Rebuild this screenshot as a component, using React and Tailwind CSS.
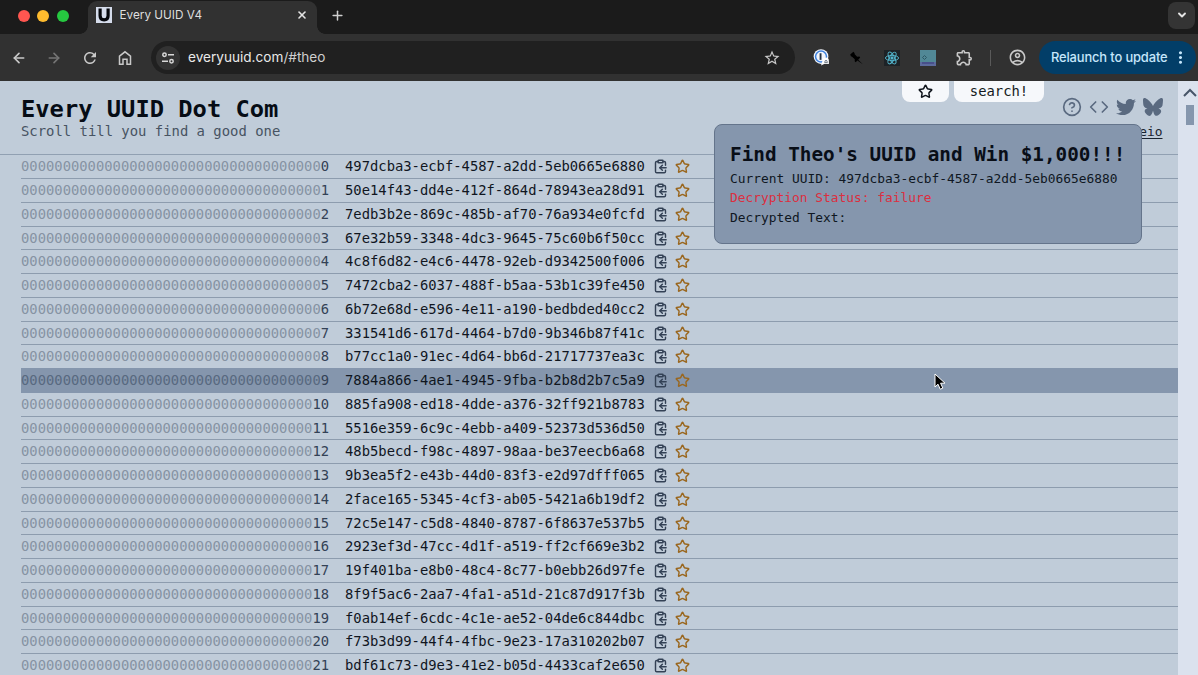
import React from "react";
import {
  ArrowLeft,
  ArrowRight,
  ChevronDown,
  CircleHelp,
  ClipboardCopy,
  Code,
  Plus,
  Star,
  X,
} from "lucide-react";
import { FaBluesky } from "react-icons/fa6";
import { FaTwitter } from "react-icons/fa";
import {
  MdOutlineAccountCircle,
  MdOutlineExtension,
  MdMoreVert,
  MdStarBorder,
  MdRefresh,
} from "react-icons/md";

const UUIDS = [
  "497dcba3-ecbf-4587-a2dd-5eb0665e6880",
  "50e14f43-dd4e-412f-864d-78943ea28d91",
  "7edb3b2e-869c-485b-af70-76a934e0fcfd",
  "67e32b59-3348-4dc3-9645-75c60b6f50cc",
  "4c8f6d82-e4c6-4478-92eb-d9342500f006",
  "7472cba2-6037-488f-b5aa-53b1c39fe450",
  "6b72e68d-e596-4e11-a190-bedbded40cc2",
  "331541d6-617d-4464-b7d0-9b346b87f41c",
  "b77cc1a0-91ec-4d64-bb6d-21717737ea3c",
  "7884a866-4ae1-4945-9fba-b2b8d2b7c5a9",
  "885fa908-ed18-4dde-a376-32ff921b8783",
  "5516e359-6c9c-4ebb-a409-52373d536d50",
  "48b5becd-f98c-4897-98aa-be37eecb6a68",
  "9b3ea5f2-e43b-44d0-83f3-e2d97dfff065",
  "2face165-5345-4cf3-ab05-5421a6b19df2",
  "72c5e147-c5d8-4840-8787-6f8637e537b5",
  "2923ef3d-47cc-4d1f-a519-ff2cf669e3b2",
  "19f401ba-e8b0-48c4-8c77-b0ebb26d97fe",
  "8f9f5ac6-2aa7-4fa1-a51d-21c87d917f3b",
  "f0ab14ef-6cdc-4c1e-ae52-04de6c844dbc",
  "f73b3d99-44f4-4fbc-9e23-17a310202b07",
  "bdf61c73-d9e3-41e2-b05d-4433caf2e650",
];
const HOVERED = 9;
const DIGITS = 37;

function TabStrip() {
  return (
    <div className="flex h-[34px] shrink-0 bg-[#1b1b1b]">
      <div className="flex w-[88px] items-center gap-[7.6px] pb-[3px] pl-[17.5px]">
        <span className="size-3 rounded-full bg-[#ff5650]" />
        <span className="size-3 rounded-full bg-[#febb2e]" />
        <span className="size-3 rounded-full bg-[#26c840]" />
      </div>
      <div className="relative mt-px flex w-[229px] items-center rounded-t-[9px] bg-[#313131] pr-[9.5px] pb-[5px] pl-2">
        <span className="absolute bottom-0 -left-2 size-2 bg-[radial-gradient(circle_at_0_0,#1b1b1b_7.5px,#313131_8px)]" />
        <span className="absolute -right-2 bottom-0 size-2 bg-[radial-gradient(circle_at_100%_0,#1b1b1b_7.5px,#313131_8px)]" />
        <svg viewBox="0 0 16 16" className="size-4">
          <rect width="16" height="16" fill="#d5dceb" />
          <path d="M4.1 1.5v7.2c0 2.6 1.4 4.1 4 4.1s4-1.5 4-4.1V1.5" fill="none" stroke="#05070c" strokeWidth="3.2" />
        </svg>
        <span className="ml-[7.5px] flex-1 pt-px text-[11.75px] text-[#dedede]">Every UUID V4</span>
        <X className="size-[12px] text-[#e4e4e4]" strokeWidth={3.2} />
      </div>
      <div className="flex flex-1 items-center justify-between pr-[3px] pb-[4px] pl-[12.5px]">
        <Plus className="size-[15px] text-[#cfcfcf]" strokeWidth={2.4} />
        <span className="flex size-[27px] items-center justify-center rounded-lg bg-[#343434]">
          <ChevronDown className="size-3 text-[#e4e4e4]" strokeWidth={3.8} />
        </span>
      </div>
    </div>
  );
}

function Toolbar() {
  return (
    <div className="flex h-[47px] shrink-0 items-center bg-[#313131] text-[#c9c9c9]">
      <ArrowLeft className="ml-[11px] size-4" strokeWidth={2.5} />
      <ArrowRight className="ml-[19px] size-4 text-[#757575]" strokeWidth={2.5} />
      <MdRefresh className="ml-[19px] size-[18px]" />
      <svg viewBox="0 0 16 16" className="ml-[18px] size-4" fill="none" stroke="currentColor" strokeWidth="1.5">
        <path d="M2.5 6.2 8 1.8l5.500 4.400v8H10V9.300H6v4.900H2.500z" />
      </svg>
      <div className="ml-[18px] flex h-[33px] w-[644px] items-center rounded-full bg-[#202020] pr-[14px] pl-[5px]">
        <span className="flex size-6 items-center justify-center rounded-full bg-[#333333]">
          <svg viewBox="0 0 14 14" className="size-[14px]" fill="none" stroke="#d8d8d8" strokeWidth="1.500">
            <circle cx="3.500" cy="3.800" r="1.700" />
            <path d="M7 3.800h6M1 10.200h6" />
            <circle cx="10.500" cy="10.200" r="1.700" />
          </svg>
        </span>
        <span className="ml-2 flex-1 text-[13.600px] text-[#e9e9e9]">
          everyuuid.com<span className="text-[#cfcfcf]">/#theo</span>
        </span>
        <MdStarBorder className="size-[18px]" />
      </div>
      <svg viewBox="0 0 18 18" className="ml-[18px] size-[17px]">
        <circle cx="8.500" cy="8" r="7.800" fill="#f2f5fb" />
        <circle cx="8.500" cy="8" r="5.800" fill="none" stroke="#3d81dd" strokeWidth="1.600" />
        <path d="M8 4.500v7" stroke="#243244" strokeWidth="2" />
        <path d="M8.500 17.500l1.500-5a3.300 3.300 0 0 1 6.800 0V16h-5z" fill="#fff" />
        <path d="M12.500 13.500a1.300 1.300 0 0 1 2.600 0M12 14.500h3.600" stroke="#55606d" fill="none" />
      </svg>
      <svg viewBox="0 0 16 16" className="ml-[18px] size-4">
        <path d="M2.200 4.600 5.400 1.800l1.300 1.500-.2.700 2.600 2.700 2.300-.1.800.9-2 2.200 4.600 4.600-5.400-3.900-1.700 1.800-1-.9.100-2.100-3-2.700-.8.100z" fill="#000" />
      </svg>
      <svg viewBox="0 0 16 16" className="ml-5 size-4" fill="none" stroke="#54b8d0" strokeWidth="0.900">
        <rect width="16" height="16" fill="#1d2226" stroke="none" />
        <ellipse cx="8" cy="8" rx="6.600" ry="2.600" />
        <ellipse cx="8" cy="8" rx="6.600" ry="2.600" transform="rotate(60 8 8)" />
        <ellipse cx="8" cy="8" rx="6.600" ry="2.600" transform="rotate(120 8 8)" />
        <circle cx="8" cy="8" r="1.200" fill="#54b8d0" />
      </svg>
      <svg viewBox="0 0 16 16" className="ml-5 size-4">
        <rect width="16" height="16" fill="#518896" />
        <rect y="12" width="16" height="4" fill="#5c6a9c" />
        <path d="M2 13h12" stroke="#3c3f80" strokeWidth="1.200" />
        <path d="M2.500 7.500 4.500 5.500 6.500 7.500 4.500 9.500z" fill="none" stroke="#2d5965" />
      </svg>
      <MdOutlineExtension className="ml-[19px] size-[19px]" />
      <span className="ml-[16px] h-4 w-px bg-[#5a5a5a]" />
      <MdOutlineAccountCircle className="ml-[17px] size-[19px]" />
      <div className="ml-[12px] flex h-[33px] w-[157px] items-center rounded-full bg-[#023e68] pl-[12px] text-[12.900px] font-medium tracking-[-0.010em] text-[#c5e6fb]">
        <span className="w-[119px] whitespace-nowrap">Relaunch to update</span>
        <MdMoreVert className="ml-px size-[19px] shrink-0" />
      </div>
    </div>
  );
}

function Header() {
  return (
    <header className="relative flex h-[74.400px] shrink-0 justify-between border-b border-[#91a0b2] pr-[15.500px] pl-[21px]">
      <div className="pt-[13px]">
        <h1 className="text-[23.75px] leading-[30px] font-bold text-[#060c15]">Every UUID Dot Com</h1>
        <p className="text-[13.900px] leading-[15px] text-[#475362]">Scroll till you find a good one</p>
      </div>
      <div className="flex flex-col items-end pt-[16px]">
        <div className="flex items-center gap-[7px] text-[#5a6a80]">
          <CircleHelp className="size-5" strokeWidth={2} />
          <Code className="size-5" strokeWidth={2} />
          <FaTwitter className="size-5" />
          <FaBluesky className="size-5" />
        </div>
        <a className="mt-[5.500px] text-[12.900px] leading-[18px] text-[#1b2430] underline underline-offset-2">eio</a>
      </div>
      <div className="absolute top-0 right-[134px] flex gap-[5px]">
        <button className="flex h-[21px] w-[47px] items-center justify-center rounded-b-lg bg-[#f6f8fb]">
          <Star className="size-[15px] text-[#10151d]" strokeWidth={2.400} />
        </button>
        <button className="flex h-[21px] w-[90px] justify-center rounded-b-lg bg-[#f6f8fb] text-[13.850px] leading-[21px] text-[#131820]">search!</button>
      </div>
    </header>
  );
}

function Row({ index, uuid }) {
  const digits = String(index);
  const hovered = index === HOVERED;
  return (
    <li
      className={
        "flex h-[23.750px] items-center border-b text-[13.830px] " +
        (hovered
          ? "border-[#8596ad] bg-[#8596ad]"
          : index === HOVERED - 1
            ? "border-[#8596ad]"
            : "border-[#8d9cae]")
      }
    >
      <span className="w-[308px] text-[#334155]">
        <span className={hovered ? "text-[#586980]" : "text-[#8693a3]"}>{"0".repeat(DIGITS - digits.length)}</span>
        {digits}
      </span>
      <span className="ml-4 text-[#10161f]">{uuid}</span>
      <ClipboardCopy className="ml-[8.200px] size-[15px] text-[#334155]" strokeWidth={2.300} />
      <Star className="ml-[7.500px] size-[15px] text-[#9a671f]" strokeWidth={2.300} />
    </li>
  );
}

function TheoDialog() {
  return (
    <div className="absolute top-[124px] left-[714px] h-[120px] w-[428px] rounded-lg border border-[#64748b] bg-[#8596ad] px-[15px] pt-4 font-['DejaVu_Sans_Mono',monospace] text-[12.880px] leading-[19.400px] whitespace-nowrap text-[#0f1722]">
      <h2 className="text-[19.320px] leading-[28px] font-bold text-[#090e17]">Find Theo's UUID and Win $1,000!!!</h2>
      <p>Current UUID: {UUIDS[0]}</p>
      <p className="text-[#dc2f3f]">Decryption Status: failure</p>
      <p>Decrypted Text:</p>
    </div>
  );
}

export default function App() {
  return (
    <div className="relative flex h-[675px] w-[1198px] flex-col overflow-hidden font-['Inter',sans-serif]">
      <TabStrip />
      <Toolbar />
      <div className="flex min-h-0 flex-1 bg-[#c0ccd9] font-['DejaVu_Sans_Mono',monospace]">
        <main className="flex min-w-0 flex-1 flex-col">
          <Header />
          <ul className="min-h-0 flex-1 overflow-hidden pl-[21px]">
            {UUIDS.map((uuid, i) => (
              <Row key={uuid} index={i} uuid={uuid} />
            ))}
          </ul>
        </main>
        <aside className="flex w-5 flex-col items-center bg-[#dbe2ee] pt-[7px] pl-1">
          <svg viewBox="0 0 14 9" className="h-[9px] w-[14px]" fill="none" stroke="#475569" strokeWidth="2">
            <path d="M1 8l6-6 6 6" />
          </svg>
          <span className="mt-2 h-5 w-2 bg-[#8596ad]" />
        </aside>
      </div>
      <TheoDialog />
      <svg viewBox="0 0 12 18" className="absolute top-[373px] left-[934px] h-[18px] w-3">
        <path d="M1 1v13l3-2.800 2.200 5 2.600-1.100-2.200-4.900H11z" fill="#000" stroke="#fff" />
      </svg>
    </div>
  );
}
